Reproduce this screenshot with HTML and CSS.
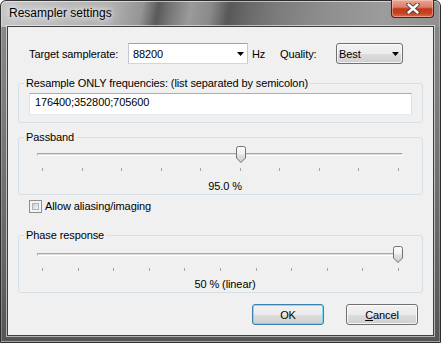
FILE: index.html
```html
<!DOCTYPE html>
<html>
<head>
<meta charset="utf-8">
<link rel="stylesheet" href="styles.css">
</head>
<body>
<div class="window">
  <div class="titlebar">
    <span class="title">Resampler settings</span>
    <span class="close">
      <svg width="14" height="11" viewBox="0 0 14 11">
        <path d="M2.5 1.5 L11.5 9.5 M11.5 1.5 L2.5 9.5" stroke="#3b3b3b" stroke-width="4.2" stroke-linecap="round" fill="none"/>
        <path d="M2.5 1.5 L11.5 9.5 M11.5 1.5 L2.5 9.5" stroke="#ffffff" stroke-width="2.4" stroke-linecap="round" fill="none"/>
      </svg>
    </span>
  </div>
  <div class="client">
    <div class="row-rate">
      <span class="lbl lbl-rate">Target samplerate:</span>
      <div class="combo combo-edit">
        <span class="combo-text">88200</span>
        <svg class="arrow" width="7" height="4" viewBox="0 0 7 4"><polygon points="0,0 7,0 3.5,4" fill="#000"/></svg>
      </div>
      <span class="lbl lbl-hz">Hz</span>
      <span class="lbl lbl-quality">Quality:</span>
      <div class="combo combo-btn">
        <span class="combo-text">Best</span>
        <svg class="arrow" width="7" height="4" viewBox="0 0 7 4"><polygon points="0,0 7,0 3.5,4" fill="#000"/></svg>
      </div>
    </div>

    <fieldset class="group group-freq">
      <legend>Resample ONLY frequencies: (list separated by semicolon)</legend>
      <div class="edit">176400;352800;705600</div>
    </fieldset>

    <fieldset class="group group-pass">
      <legend>Passband</legend>
      <div class="slider">
        <div class="track"></div>
        <svg class="thumb" style="left:199px" width="10" height="17" viewBox="0 0 10 17">
          <defs>
            <linearGradient id="tg1" x1="0" y1="0" x2="0" y2="1">
              <stop offset="0" stop-color="#fbfbfb"/>
              <stop offset="0.45" stop-color="#f1f1f1"/>
              <stop offset="0.55" stop-color="#e0e0e0"/>
              <stop offset="1" stop-color="#cdcdcd"/>
            </linearGradient>
          </defs>
          <path d="M0.5 2.5 Q0.5 0.5 2.5 0.5 H7.5 Q9.5 0.5 9.5 2.5 V12 L5 16.5 L0.5 12 Z" fill="url(#tg1)" stroke="#707070"/>
        </svg>
      </div>
      <div class="ticks"><i></i><i></i><i></i><i></i><i></i><i></i><i></i><i></i><i></i><i></i></div>
      <div class="value">95.0 %</div>
    </fieldset>

    <label class="check-row">
      <span class="checkbox"><span class="checkbox-inner"></span></span>
      <span>Allow aliasing/imaging</span>
    </label>

    <fieldset class="group group-phase">
      <legend>Phase response</legend>
      <div class="slider">
        <div class="track"></div>
        <svg class="thumb" style="left:356px" width="10" height="17" viewBox="0 0 10 17">
          <defs>
            <linearGradient id="tg2" x1="0" y1="0" x2="0" y2="1">
              <stop offset="0" stop-color="#fbfbfb"/>
              <stop offset="0.45" stop-color="#f1f1f1"/>
              <stop offset="0.55" stop-color="#e0e0e0"/>
              <stop offset="1" stop-color="#cdcdcd"/>
            </linearGradient>
          </defs>
          <path d="M0.5 2.5 Q0.5 0.5 2.5 0.5 H7.5 Q9.5 0.5 9.5 2.5 V12 L5 16.5 L0.5 12 Z" fill="url(#tg2)" stroke="#707070"/>
        </svg>
      </div>
      <div class="ticks"><i></i><i></i><i></i><i></i><i></i><i></i><i></i><i></i><i></i><i></i><i></i></div>
      <div class="value">50 % (linear)</div>
    </fieldset>

    <div class="buttons">
      <button class="btn btn-default">OK</button>
      <button class="btn"><u>C</u>ancel</button>
    </div>
  </div>
</div>
</body>
</html>
```
FILE: styles.css
```css
html, body {
  margin: 0;
  padding: 0;
  background: #ffffff;
}
body {
  font-family: "Liberation Sans", Arial, sans-serif;
  font-size: 11px;
  letter-spacing: -0.1px;
  color: #000;
}

.window {
  box-sizing: border-box;
  width: 441px;
  height: 343px;
  border: 1px solid #2e2e2e;
  border-radius: 6px 6px 0 0;
  padding: 0 6px 6px;
  display: flex;
  flex-direction: column;
  background:
    linear-gradient(100deg, #c4c4c4 0px, #b0b0b0 110px, #959595 140px, #5a5a5a 156px, #7a7a7a 170px, #9a9a9a 188px, #8a8a8a 208px, #585858 226px, #6a6a6a 246px, #7c7c7c 275px, #8e8e8e 320px, #9c9c9c 380px, #8e8e8e 441px) top left / 100% 26px no-repeat,
    linear-gradient(#8c8c8c, #626262 80%, #555555);
  box-shadow: inset 0 1px 0 rgba(255,255,255,0.55), inset 1px 0 0 rgba(255,255,255,0.25), inset -1px 0 0 rgba(255,255,255,0.25), inset 0 -1px 0 #48c4dc;
}

.titlebar {
  height: 25px;
  display: flex;
  justify-content: space-between;
  align-items: flex-start;
  flex: none;
}
.title {
  margin-top: 5px;
  padding-left: 2px;
  font-size: 12px;
  line-height: 14px;
  letter-spacing: 0;
  color: #000;
  text-shadow: 0 0 5px rgba(255,255,255,0.95), 0 0 10px rgba(255,255,255,0.85), 0 0 16px rgba(255,255,255,0.8);
}
.close {
  box-sizing: border-box;
  margin-top: -1px;
  width: 43px;
  height: 18px;
  border: 1px solid #5a1c10;
  border-top: none;
  border-radius: 0 0 4px 4px;
  background: linear-gradient(#eba594 0%, #dc7e68 42%, #c3391a 52%, #c4411f 75%, #dc6a48 100%);
  box-shadow: inset 0 0 0 1px rgba(255,220,210,0.45);
  display: flex;
  align-items: center;
  justify-content: center;
}

.client {
  flex: 1;
  background: #f0f0f0;
  border: 1px solid #3e3e3e;
  box-shadow: 0 0 0 1px rgba(255,255,255,0.55);
  display: flex;
  flex-direction: column;
}

.row-rate {
  margin-top: 16px;
  height: 21px;
  padding-left: 21px;
  display: flex;
  align-items: flex-start;
}
.lbl {
  padding-top: 5px;
  line-height: 13px;
  white-space: nowrap;
}
.lbl-rate { width: 99px; }
.lbl-hz { width: 28px; margin-left: 4px; }
.lbl-quality { width: 56px; }

.combo {
  box-sizing: border-box;
  height: 21px;
  display: flex;
  align-items: flex-start;
  justify-content: space-between;
}
.combo-text {
  padding-top: 2px;
  line-height: 17px;
}
.combo .arrow {
  margin-top: 8px;
  margin-right: 3px;
}
.combo-edit {
  width: 120px;
  border: 1px solid #a6a9af;
  border-color: #a0a3a9 #c6c9cf #d2d6dc #c6c9cf;
  background: #fff;
  padding-left: 4px;
}
.combo-btn {
  width: 67px;
  border: 1px solid #707070;
  border-radius: 3px;
  padding-left: 2px;
  background: linear-gradient(#f2f2f2 0%, #ebebeb 50%, #dddddd 51%, #cfcfcf 100%);
  box-shadow: inset 0 0 0 1px rgba(255,255,255,0.7);
}

.group {
  min-width: 0;
  margin: 0 10px;
  padding: 0;
  border: 1px solid #d5dfe5;
  border-radius: 3px;
}
.group legend {
  margin-left: 5px;
  padding: 0 2px;
  line-height: 13px;
  font-size: 11px;
}
.group-freq { margin-top: 13px; padding: 3px 0 7px; }
.group-pass { margin-top: 8px; padding: 0 0 1px; }
.group-phase { margin-top: 16px; padding: 0 0 1px; }

.edit {
  box-sizing: border-box;
  margin: 0 10px;
  height: 22px;
  padding-left: 5px;
  line-height: 17px;
  background: #fff;
  border: 1px solid #abadb3;
  border-color: #abadb3 #dbdfe6 #e3e9ef #e2e3ea;
}

.slider {
  position: relative;
  box-sizing: border-box;
  width: 366px;
  height: 17px;
  margin: 2px 0 0 18px;
  padding-top: 7px;
}
.group-phase .slider { margin-top: 4px; }
.track {
  box-sizing: border-box;
  height: 3px;
  border-top: 1px solid #a9a9a9;
  border-left: 1px solid #b4b4b4;
  border-bottom: 1px solid #ffffff;
  border-right: 1px solid #ffffff;
  background: #dcdcdc;
}
.thumb {
  position: absolute;
  top: 0;
}
.ticks {
  box-sizing: border-box;
  width: 366px;
  height: 3px;
  margin: 5px 0 0 18px;
  padding: 0 4px 0 5px;
  display: flex;
  justify-content: space-between;
}
.ticks i {
  display: block;
  width: 1px;
  height: 3px;
  background: #a4a4a4;
}
.value {
  margin-top: 9px;
  padding-left: 9px;
  line-height: 13px;
  text-align: center;
}
.group-phase .value { margin-top: 7px; }

.check-row {
  margin-top: 5px;
  padding-left: 21px;
  height: 13px;
  display: flex;
  align-items: flex-start;
  line-height: 13px;
}
.checkbox {
  box-sizing: border-box;
  width: 13px;
  height: 13px;
  margin-right: 3px;
  border: 1px solid #8e8f8f;
  background: #f4f4f4;
  padding: 2px;
}
.checkbox-inner {
  display: block;
  box-sizing: border-box;
  width: 7px;
  height: 7px;
  border: 1px solid #aeb3b9;
  background: linear-gradient(135deg, #c9cdd3, #f4f5f6);
}

.buttons {
  margin-top: 11px;
  padding-right: 15px;
  display: flex;
  justify-content: flex-end;
  gap: 22px;
}
.btn {
  box-sizing: border-box;
  width: 72px;
  height: 21px;
  padding: 1px 0 0;
  margin: 0;
  font: inherit;
  letter-spacing: -0.1px;
  line-height: 18px;
  color: #000;
  border: 1px solid #707070;
  border-radius: 3px;
  background: linear-gradient(#f2f2f2 0%, #ebebeb 50%, #dddddd 51%, #cfcfcf 100%);
  box-shadow: inset 0 0 0 1px rgba(255,255,255,0.75);
  text-align: center;
}
.btn-default {
  border-color: #3c7fb1;
  box-shadow: inset 0 0 0 1px rgba(92,212,245,0.75);
}
```
